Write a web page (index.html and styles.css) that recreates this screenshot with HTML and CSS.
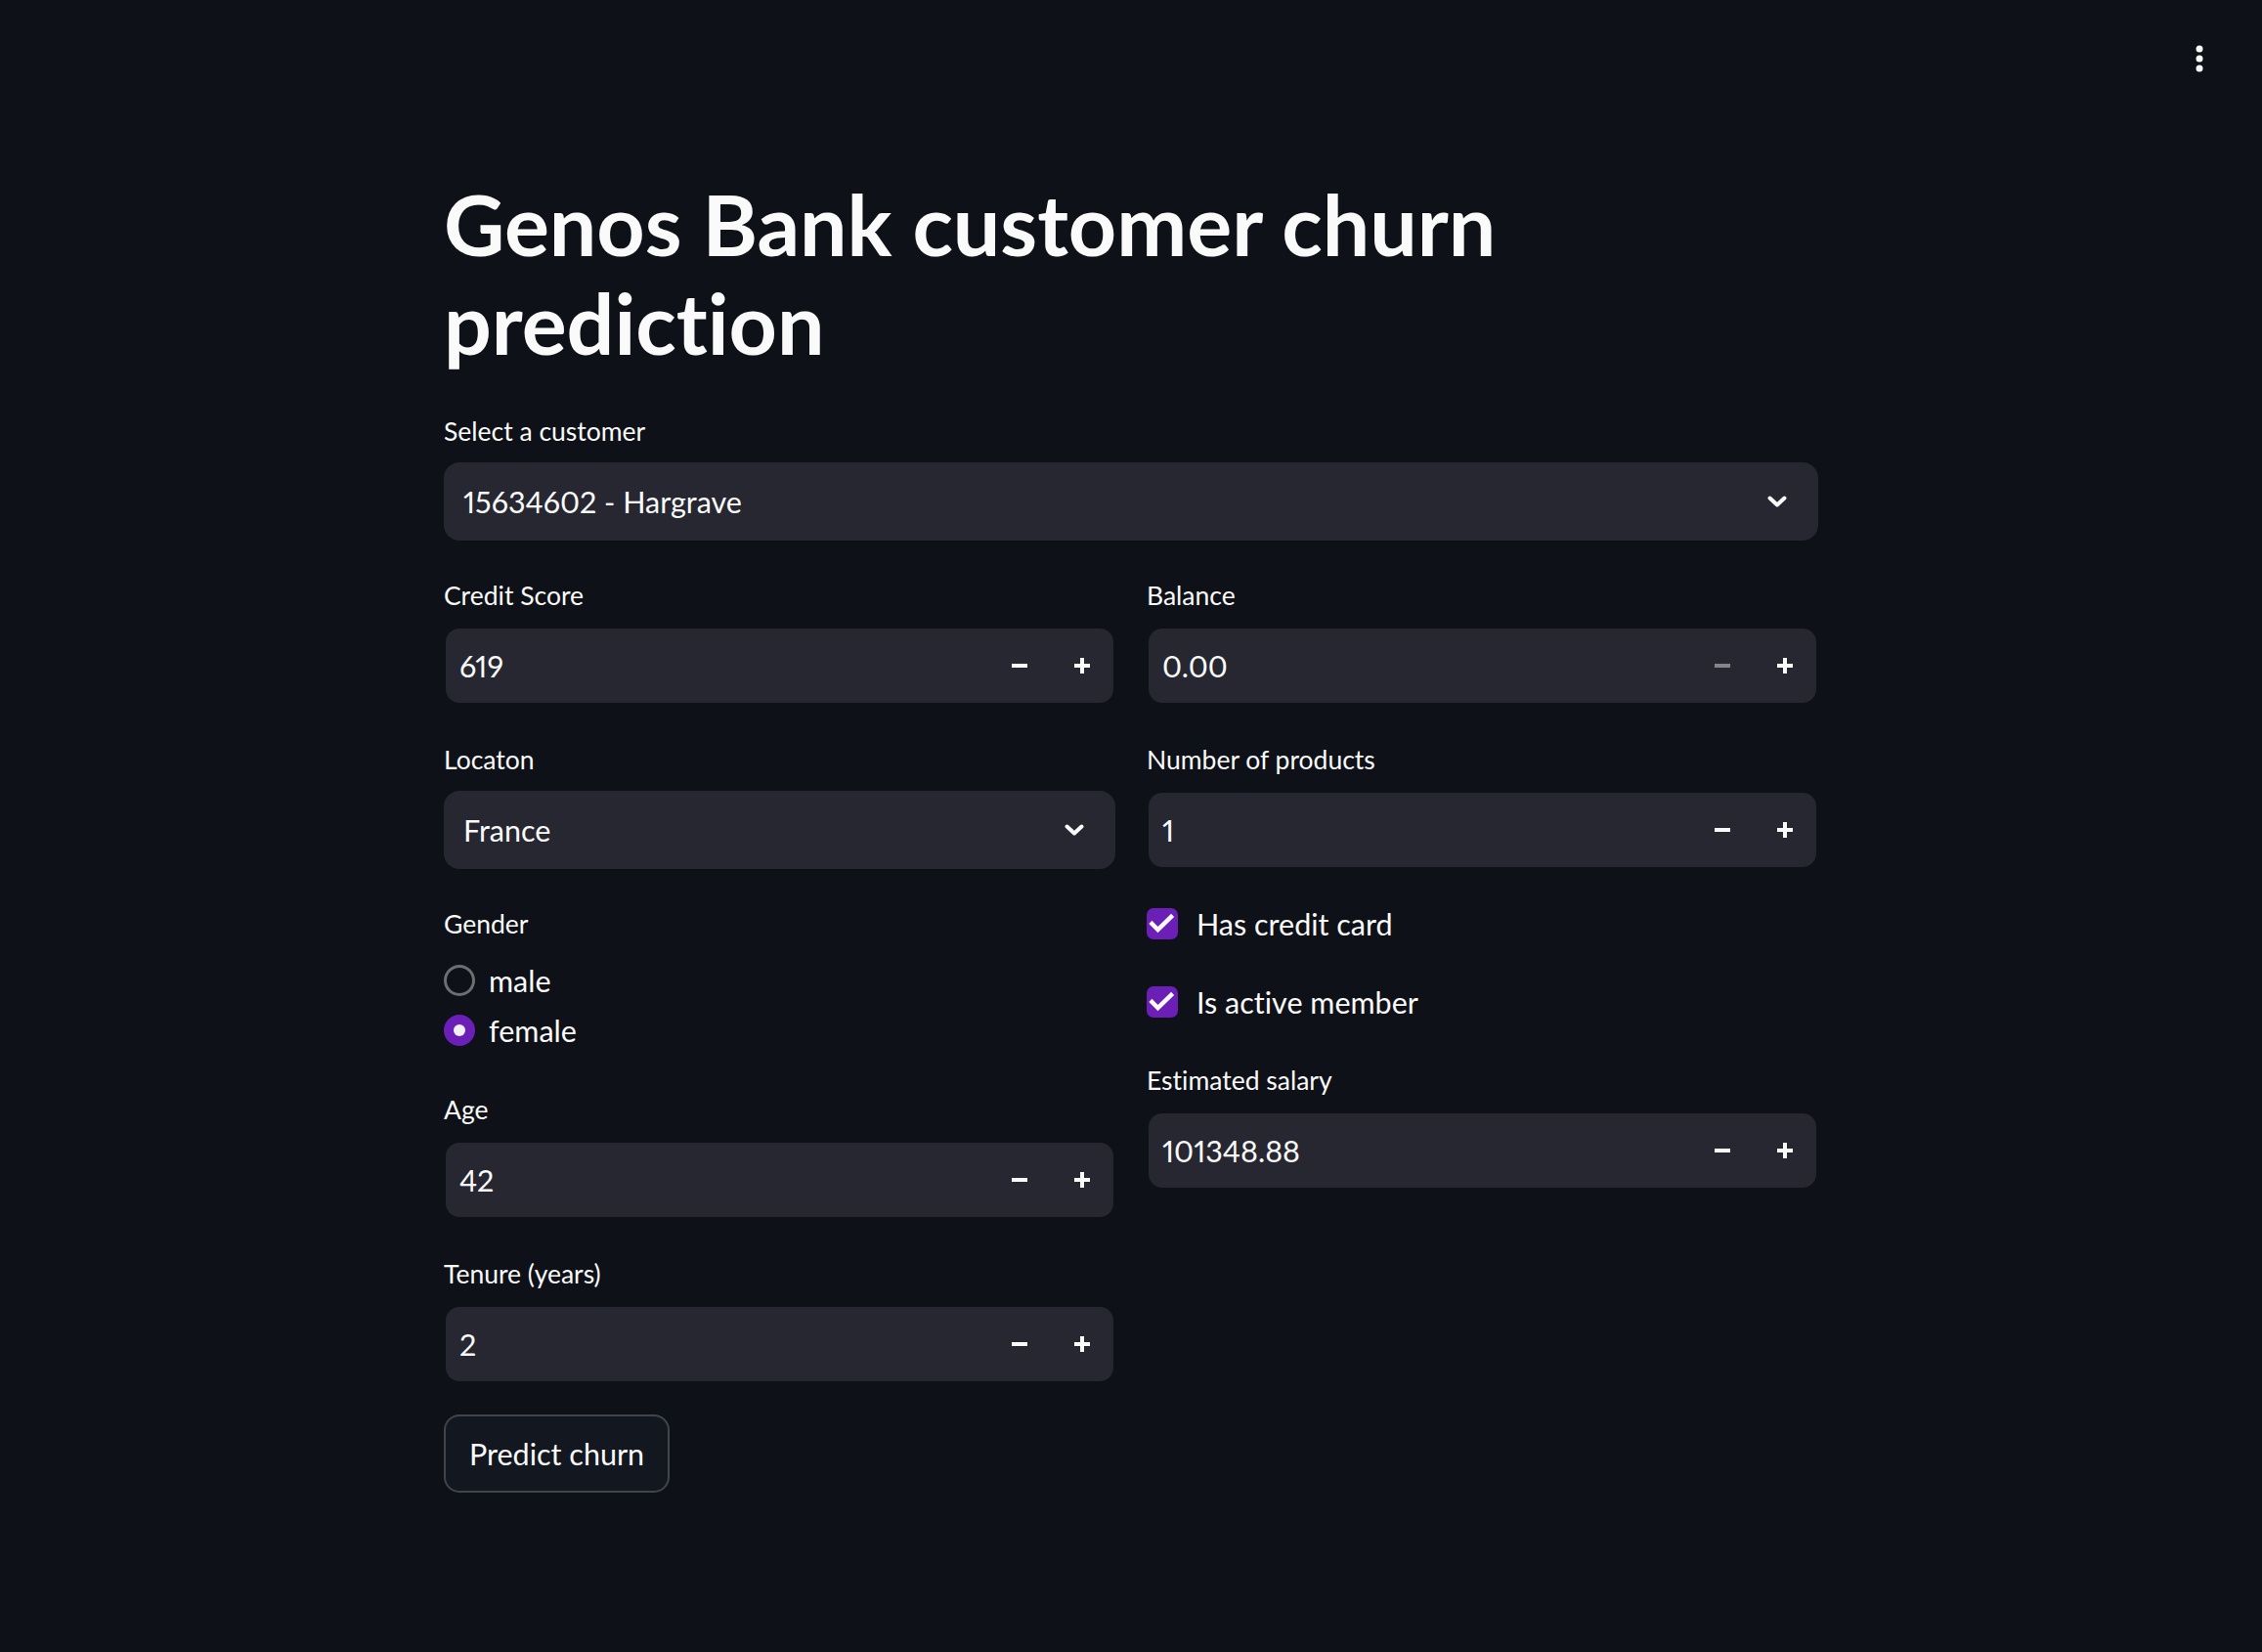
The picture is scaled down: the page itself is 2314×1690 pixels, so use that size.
FILE: index.html
```html
<!DOCTYPE html>
<html lang="en">
<head>
<meta charset="utf-8">
<title>Genos Bank customer churn prediction</title>
<link rel="stylesheet" href="styles.css">
</head>
<body>
<header class="toolbar">
  <button class="menu-btn" aria-label="Main menu">
    <svg width="8" height="28" viewBox="0 0 8 28"><circle cx="4" cy="4" r="3.5" fill="#fafafa"/><circle cx="4" cy="14" r="3.5" fill="#fafafa"/><circle cx="4" cy="24" r="3.5" fill="#fafafa"/></svg>
  </button>
</header>
<main class="block">
  <h1 class="title">Genos Bank customer churn prediction</h1>

  <div class="field">
    <div class="label">Select a customer</div>
    <div class="select">
      <span class="value">15634602 - Hargrave</span>
      <svg class="chevron" width="20" height="12" viewBox="0 0 20 12"><polyline points="2.5,2.5 10,9.5 17.5,2.5" fill="none" stroke="#fafafa" stroke-width="4" stroke-linecap="round" stroke-linejoin="round"/></svg>
    </div>
  </div>

  <div class="columns">
    <div class="col">
      <div class="field">
        <div class="label">Credit Score</div>
        <div class="number">
          <span class="value">619</span>
          <div class="steps">
            <span class="step"><svg width="16" height="4" viewBox="0 0 16 4"><rect width="16" height="4" fill="currentColor"/></svg></span>
            <span class="step"><svg width="16" height="16" viewBox="0 0 16 16"><rect y="6" width="16" height="4" fill="currentColor"/><rect x="6" width="4" height="16" fill="currentColor"/></svg></span>
          </div>
        </div>
      </div>

      <div class="field">
        <div class="label">Locaton</div>
        <div class="select">
          <span class="value">France</span>
          <svg class="chevron" width="20" height="12" viewBox="0 0 20 12"><polyline points="2.5,2.5 10,9.5 17.5,2.5" fill="none" stroke="#fafafa" stroke-width="4" stroke-linecap="round" stroke-linejoin="round"/></svg>
        </div>
      </div>

      <div class="field">
        <div class="label">Gender</div>
        <div class="radios">
          <div class="radio-row"><span class="radio"></span><span class="opt">male</span></div>
          <div class="radio-row"><span class="radio on"><span class="dot"></span></span><span class="opt">female</span></div>
        </div>
      </div>

      <div class="field">
        <div class="label">Age</div>
        <div class="number">
          <span class="value">42</span>
          <div class="steps">
            <span class="step"><svg width="16" height="4" viewBox="0 0 16 4"><rect width="16" height="4" fill="currentColor"/></svg></span>
            <span class="step"><svg width="16" height="16" viewBox="0 0 16 16"><rect y="6" width="16" height="4" fill="currentColor"/><rect x="6" width="4" height="16" fill="currentColor"/></svg></span>
          </div>
        </div>
      </div>

      <div class="field">
        <div class="label">Tenure (years)</div>
        <div class="number">
          <span class="value">2</span>
          <div class="steps">
            <span class="step"><svg width="16" height="4" viewBox="0 0 16 4"><rect width="16" height="4" fill="currentColor"/></svg></span>
            <span class="step"><svg width="16" height="16" viewBox="0 0 16 16"><rect y="6" width="16" height="4" fill="currentColor"/><rect x="6" width="4" height="16" fill="currentColor"/></svg></span>
          </div>
        </div>
      </div>
    </div>

    <div class="col">
      <div class="field">
        <div class="label">Balance</div>
        <div class="number">
          <span class="value">0.00</span>
          <div class="steps">
            <span class="step disabled"><svg width="16" height="4" viewBox="0 0 16 4"><rect width="16" height="4" fill="currentColor"/></svg></span>
            <span class="step"><svg width="16" height="16" viewBox="0 0 16 16"><rect y="6" width="16" height="4" fill="currentColor"/><rect x="6" width="4" height="16" fill="currentColor"/></svg></span>
          </div>
        </div>
      </div>

      <div class="field">
        <div class="label">Number of products</div>
        <div class="number">
          <span class="value">1</span>
          <div class="steps">
            <span class="step"><svg width="16" height="4" viewBox="0 0 16 4"><rect width="16" height="4" fill="currentColor"/></svg></span>
            <span class="step"><svg width="16" height="16" viewBox="0 0 16 16"><rect y="6" width="16" height="4" fill="currentColor"/><rect x="6" width="4" height="16" fill="currentColor"/></svg></span>
          </div>
        </div>
      </div>

      <div class="check-row">
        <span class="checkbox"><svg width="32" height="32" viewBox="0 0 32 32"><polyline points="5.5,16 11.5,22 25,9" fill="none" stroke="#fafafa" stroke-width="4.5" stroke-linecap="square"/></svg></span>
        <span class="opt">Has credit card</span>
      </div>

      <div class="check-row">
        <span class="checkbox"><svg width="32" height="32" viewBox="0 0 32 32"><polyline points="5.5,16 11.5,22 25,9" fill="none" stroke="#fafafa" stroke-width="4.5" stroke-linecap="square"/></svg></span>
        <span class="opt">Is active member</span>
      </div>

      <div class="field">
        <div class="label">Estimated salary</div>
        <div class="number">
          <span class="value">101348.88</span>
          <div class="steps">
            <span class="step"><svg width="16" height="4" viewBox="0 0 16 4"><rect width="16" height="4" fill="currentColor"/></svg></span>
            <span class="step"><svg width="16" height="16" viewBox="0 0 16 16"><rect y="6" width="16" height="4" fill="currentColor"/><rect x="6" width="4" height="16" fill="currentColor"/></svg></span>
          </div>
        </div>
      </div>
    </div>
  </div>

  <button class="btn">Predict churn</button>
</main>
</body>
</html>
```

FILE: styles.css
```css
html, body {
  margin: 0;
  padding: 0;
  background: #0e1117;
  color: #fafafa;
  font-family: Lato, "Noto Sans", sans-serif;
  font-variant-numeric: proportional-nums;
  font-variant-ligatures: none;
}

.toolbar {
  height: 120px;
  box-sizing: border-box;
  display: flex;
  justify-content: flex-end;
  align-items: flex-start;
  padding: 46px 60px 0 0;
}

.menu-btn {
  background: none;
  border: 0;
  padding: 0;
  display: flex;
  cursor: pointer;
}

.block {
  width: 1406px;
  margin: 0 auto;
  padding-top: 58px;
  display: flex;
  flex-direction: column;
  gap: 32px;
}

.title {
  margin: 0;
  font-size: 86px;
  font-weight: 700;
  line-height: 101px;
  padding-bottom: 5px;
}

.field {
  display: flex;
  flex-direction: column;
}

.label {
  height: 48px;
  display: flex;
  align-items: center;
  margin-bottom: 8px;
  font-size: 26.5px;
}

.select {
  height: 80px;
  box-sizing: border-box;
  background: #262730;
  border-radius: 16px;
  padding: 0 32px 0 20px;
  display: flex;
  align-items: center;
  justify-content: space-between;
  font-size: 30.5px;
}

.number {
  height: 80px;
  box-sizing: border-box;
  border: 2px solid transparent;
  background: #262730;
  background-clip: padding-box;
  border-radius: 16px;
  padding-left: 14px;
  display: flex;
  align-items: center;
  justify-content: space-between;
  font-size: 30.5px;
}

.steps {
  display: flex;
  height: 100%;
}

.step {
  width: 64px;
  height: 100%;
  display: flex;
  align-items: center;
  justify-content: center;
  color: #fafafa;
}

.step.disabled {
  color: rgba(250, 250, 250, 0.45);
}

.columns {
  display: grid;
  grid-template-columns: 1fr 1fr;
  gap: 32px;
}

.col {
  display: flex;
  flex-direction: column;
  gap: 32px;
}

.radios {
  display: flex;
  flex-direction: column;
}

.radio-row {
  height: 51px;
  display: flex;
  align-items: center;
  gap: 14px;
}

.opt {
  font-size: 30.5px;
}

.radio {
  width: 32px;
  height: 32px;
  box-sizing: border-box;
  border-radius: 50%;
  border: 3px solid rgba(250, 250, 250, 0.4);
  background: #0e1117;
  display: flex;
  align-items: center;
  justify-content: center;
}

.radio.on {
  border: 0;
  background: #6b1fb6;
}

.dot {
  width: 12px;
  height: 12px;
  border-radius: 50%;
  background: #f0f0f5;
}

.check-row {
  height: 48px;
  display: flex;
  align-items: center;
  gap: 19px;
}

.checkbox {
  width: 32px;
  height: 32px;
  border-radius: 7px;
  background: #6b1fb6;
  display: flex;
}

.btn {
  align-self: flex-start;
  height: 80px;
  box-sizing: border-box;
  padding: 0 24px;
  border: 2px solid rgba(250, 250, 250, 0.2);
  border-radius: 16px;
  background: #131720;
  color: #fafafa;
  font-family: inherit;
  font-size: 30.5px;
  cursor: pointer;
}
```
